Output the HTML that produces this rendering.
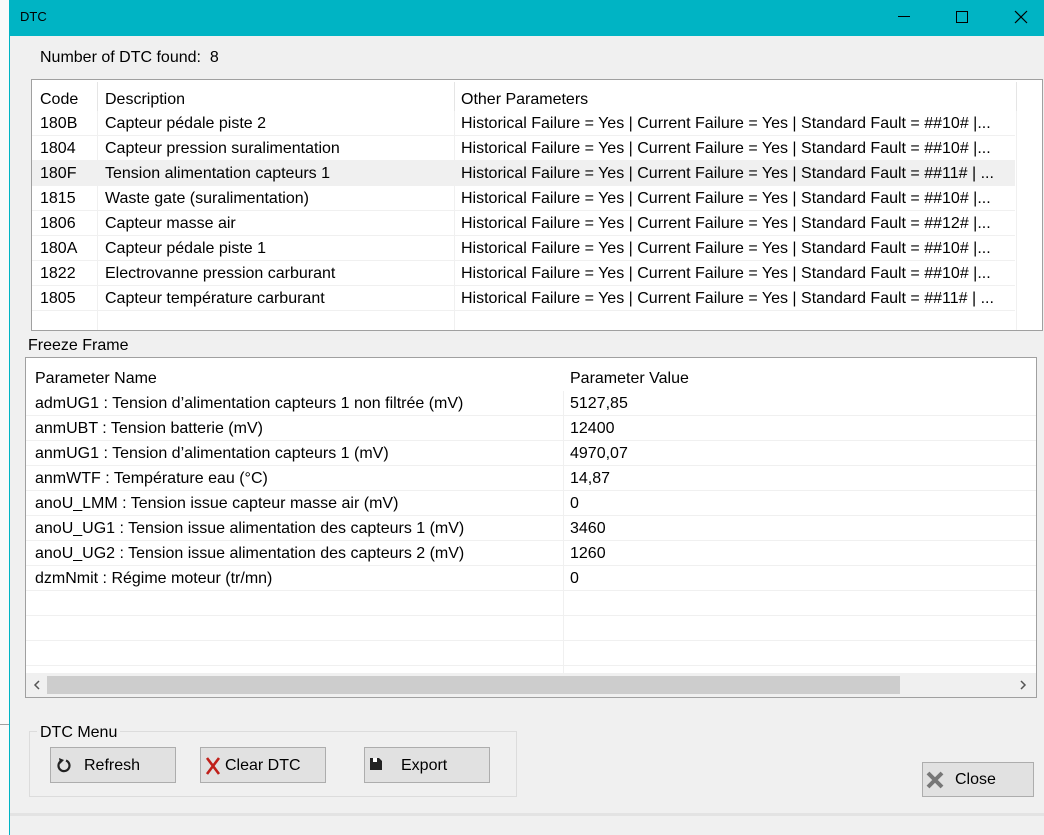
<!DOCTYPE html>
<html><head><meta charset="utf-8"><style>
*{margin:0;padding:0;box-sizing:border-box}
body{width:1044px;height:835px;position:relative;overflow:hidden;background:#f0f0f0;font-family:"Liberation Sans",sans-serif;font-size:16px;color:#000}
.a{position:absolute;white-space:nowrap}
.tbl{position:absolute;background:#fff;border:1px solid #a0a0a0;overflow:hidden}
.row{position:absolute;left:0;right:0;height:25px;border-bottom:1px solid #f0f0f0}
.row span{position:absolute;top:4px}
.btn{position:absolute;background:#e1e1e1;border:1px solid #adadad;font-size:16px}
</style></head><body>
<div class="a" style="left:0;top:0;width:9px;height:835px;background:#fafafa"></div>
<div class="a" style="left:9px;top:0;width:1px;height:835px;background:#00b4c4"></div>
<div class="a" style="left:0;top:724px;width:9px;height:1px;background:#a0a0a0"></div>
<div class="a" style="left:10px;top:0;width:1034px;height:36px;background:#00b4c4"></div>
<div class="a" style="left:20px;top:9px;font-size:13px">DTC</div>
<div class="a" style="left:898px;top:16px;width:12px;height:1px;background:#000"></div>
<div class="a" style="left:956px;top:11px;width:12px;height:12px;border:1px solid #000"></div>
<svg class="a" style="left:1014px;top:10px" width="14" height="14"><path d="M1 1L13 13M13 1L1 13" stroke="#000" stroke-width="1.2"/></svg>

<div class="a" style="left:40px;top:49px">Number of DTC found:&nbsp; 8</div>

<div class="tbl" style="left:31px;top:79px;width:1012px;height:252px">
 <div class="a" style="left:65px;top:2px;width:1px;height:29px;background:#e5e5e5"></div>
 <div class="a" style="left:422px;top:2px;width:1px;height:29px;background:#e5e5e5"></div>
 <div class="a" style="left:984px;top:2px;width:1px;height:29px;background:#e5e5e5"></div>
 <div class="row" style="top:7px;border:none"><span style="left:8px">Code</span><span style="left:73px">Description</span><span style="left:429px">Other Parameters</span></div>
 <div id="dtc"></div>
</div>

<div class="a" style="left:28px;top:337px">Freeze Frame</div>
<div class="tbl" style="left:25px;top:357px;width:1012px;height:341px">
 <div class="row" style="top:8px;border:none"><span style="left:9px">Parameter Name</span><span style="left:544px">Parameter Value</span></div>
 <div id="ff"></div>
 <div class="a" style="left:0;top:315px;width:1010px;height:24px;background:#f0f0f0"></div>
 <div class="a" style="left:21px;top:318px;width:853px;height:18px;background:#cdcdcd"></div>
 <svg class="a" style="left:7px;top:322px" width="8" height="10"><path d="M6 1L2 5L6 9" fill="none" stroke="#555" stroke-width="1.5"/></svg>
 <svg class="a" style="left:993px;top:322px" width="8" height="10"><path d="M2 1L6 5L2 9" fill="none" stroke="#555" stroke-width="1.5"/></svg>
</div>

<div class="a" style="left:29px;top:731px;width:488px;height:66px;border:1px solid #dcdcdc"></div>
<div class="a" style="left:37px;top:724px;background:#f0f0f0;padding:0 3px">DTC Menu</div>
<div class="btn" style="left:50px;top:747px;width:126px;height:36px">
 <svg class="a" style="left:6px;top:9px" width="14" height="16"><path d="M4 4A5.5 5.5 0 1 0 9 3.5" fill="none" stroke="#222" stroke-width="2.2"/><path d="M2 1L7 3L3 7Z" fill="#222"/></svg>
 <span class="a" style="left:33px;top:9px">Refresh</span></div>
<div class="btn" style="left:200px;top:747px;width:126px;height:36px">
 <svg class="a" style="left:4px;top:9px" width="16" height="18"><path d="M2 1L14 17M14 1L2 17" stroke="#c0201a" stroke-width="2.6"/></svg>
 <span class="a" style="left:24px;top:9px">Clear DTC</span></div>
<div class="btn" style="left:364px;top:747px;width:126px;height:36px">
 <svg class="a" style="left:4px;top:9px" width="14" height="14"><path d="M1 1H10L13 4V13H1Z" fill="#222"/><rect x="4" y="1" width="4" height="4" fill="#fff"/></svg>
 <span class="a" style="left:36px;top:9px">Export</span></div>
<div class="btn" style="left:922px;top:762px;width:112px;height:35px">
 <svg class="a" style="left:2px;top:7px" width="20" height="20"><path d="M3 3L17 17M17 3L3 17" stroke="#777" stroke-width="4"/></svg>
 <span class="a" style="left:32px;top:8px">Close</span></div>
<div class="a" style="left:10px;top:813px;width:1034px;height:3px;background:#e3e3e3"></div>

<script>
var d=[["180B","Capteur pédale piste 2","10# |..."],["1804","Capteur pression suralimentation","10# |..."],["180F","Tension alimentation capteurs 1","11# | ..."],["1815","Waste gate (suralimentation)","10# |..."],["1806","Capteur masse air","12# |..."],["180A","Capteur pédale piste 1","10# |..."],["1822","Electrovanne pression carburant","10# |..."],["1805","Capteur température carburant","11# | ..."]];
var h="";d.forEach(function(r,i){h+='<div class="row" style="top:'+(31+i*25)+'px;'+(i==2?'background:#f0f0f0;right:27px':'right:27px')+'"><span style="left:8px">'+r[0]+'</span><span style="left:73px">'+r[1]+'</span><span style="left:429px">Historical Failure = Yes | Current Failure = Yes | Standard Fault = ##'+r[2]+'</span></div>';});
h+='<div class="a" style="left:65px;top:31px;width:1px;height:220px;background:#f0f0f0"></div><div class="a" style="left:422px;top:31px;width:1px;height:220px;background:#f0f0f0"></div><div class="a" style="left:984px;top:31px;width:1px;height:220px;background:#f0f0f0"></div>';
document.getElementById("dtc").innerHTML=h;
var f=[["admUG1 : Tension d’alimentation capteurs 1 non filtrée (mV)","5127,85"],["anmUBT : Tension batterie (mV)","12400"],["anmUG1 : Tension d’alimentation capteurs 1 (mV)","4970,07"],["anmWTF : Température eau (°C)","14,87"],["anoU_LMM : Tension issue capteur masse air (mV)","0"],["anoU_UG1 : Tension issue alimentation des capteurs 1 (mV)","3460"],["anoU_UG2 : Tension issue alimentation des capteurs 2 (mV)","1260"],["dzmNmit : Régime moteur (tr/mn)","0"],["",""],["",""],["",""]];
h="";f.forEach(function(r,i){h+='<div class="row" style="top:'+(33+i*25)+'px"><span style="left:9px">'+r[0]+'</span><span style="left:544px">'+r[1]+'</span></div>';});
h+='<div class="a" style="left:537px;top:33px;width:1px;height:285px;background:#f0f0f0"></div>';
document.getElementById("ff").innerHTML=h;
</script>
</body></html>
